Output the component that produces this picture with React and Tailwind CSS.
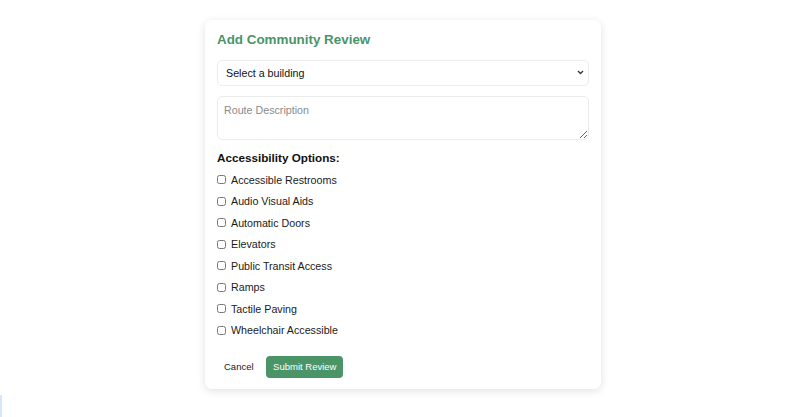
import { useState } from 'react'

const OPTIONS = [
  'Accessible Restrooms',
  'Audio Visual Aids',
  'Automatic Doors',
  'Elevators',
  'Public Transit Access',
  'Ramps',
  'Tactile Paving',
  'Wheelchair Accessible',
]

export default function App() {
  const [checked, setChecked] = useState({})
  const [building, setBuilding] = useState('')

  return (
    <div className="relative min-h-[417px] bg-white pt-[20px] font-['Liberation_Sans',Arial,sans-serif] text-[#111]">
      <div className="mx-auto w-[396px] rounded-[7px] bg-white px-[12px] pt-[12px] pb-[11px] shadow-[0_2px_8px_rgba(0,0,0,0.12)]">
        <h2 className="text-[13.4px] font-bold leading-[16px] text-[#4a9468]">Add Community Review</h2>

        <div className="relative mt-[12px]">
          <select
            value={building}
            onChange={e => setBuilding(e.target.value)}
            className="h-[26px] w-full appearance-none rounded-[5px] border border-[#ececec] bg-white px-[8px] text-[10.7px] text-[#111] outline-none"
          >
            <option value="">Select a building</option>
          </select>
          <svg className="pointer-events-none absolute right-[5px] top-[10px]" width="7" height="5" viewBox="0 0 7 5">
            <path d="M1 1 L3.5 3.5 L6 1" fill="none" stroke="#333" strokeWidth="1.3" />
          </svg>
        </div>

        <textarea
          placeholder="Route Description"
          className="mt-[10px] block h-[44px] w-full rounded-[5px] border border-[#ececec] px-[6px] py-[7px] text-[10.7px] leading-[13px] outline-none placeholder:text-[#8a8a8a]"
        />

        <div className="mt-[11px] text-[11.7px] font-bold leading-[14px]">Accessibility Options:</div>

        <div className="mt-[4px] flex flex-col">
          {OPTIONS.map(opt => (
            <label key={opt} className="flex h-[21.5px] items-center gap-[5px] text-[10.7px] text-[#1a1a1a]">
              <input
                type="checkbox"
                checked={!!checked[opt]}
                onChange={() => setChecked(c => ({ ...c, [opt]: !c[opt] }))}
                className="h-[9px] w-[9px]"
              />
              <span>{opt}</span>
            </label>
          ))}
        </div>

        <div className="mt-[15px] flex items-center gap-[5.5px]">
          <button className="h-[22px] px-[7px] text-[9.5px] text-[#222]">Cancel</button>
          <button className="h-[22px] rounded-[4px] bg-[#4a9468] px-[7px] text-[9.5px] text-white">Submit Review</button>
        </div>
      </div>

      <div className="absolute bottom-0 left-0 h-[22px] w-[2px] bg-[#d6e6f7]" />
    </div>
  )
}
